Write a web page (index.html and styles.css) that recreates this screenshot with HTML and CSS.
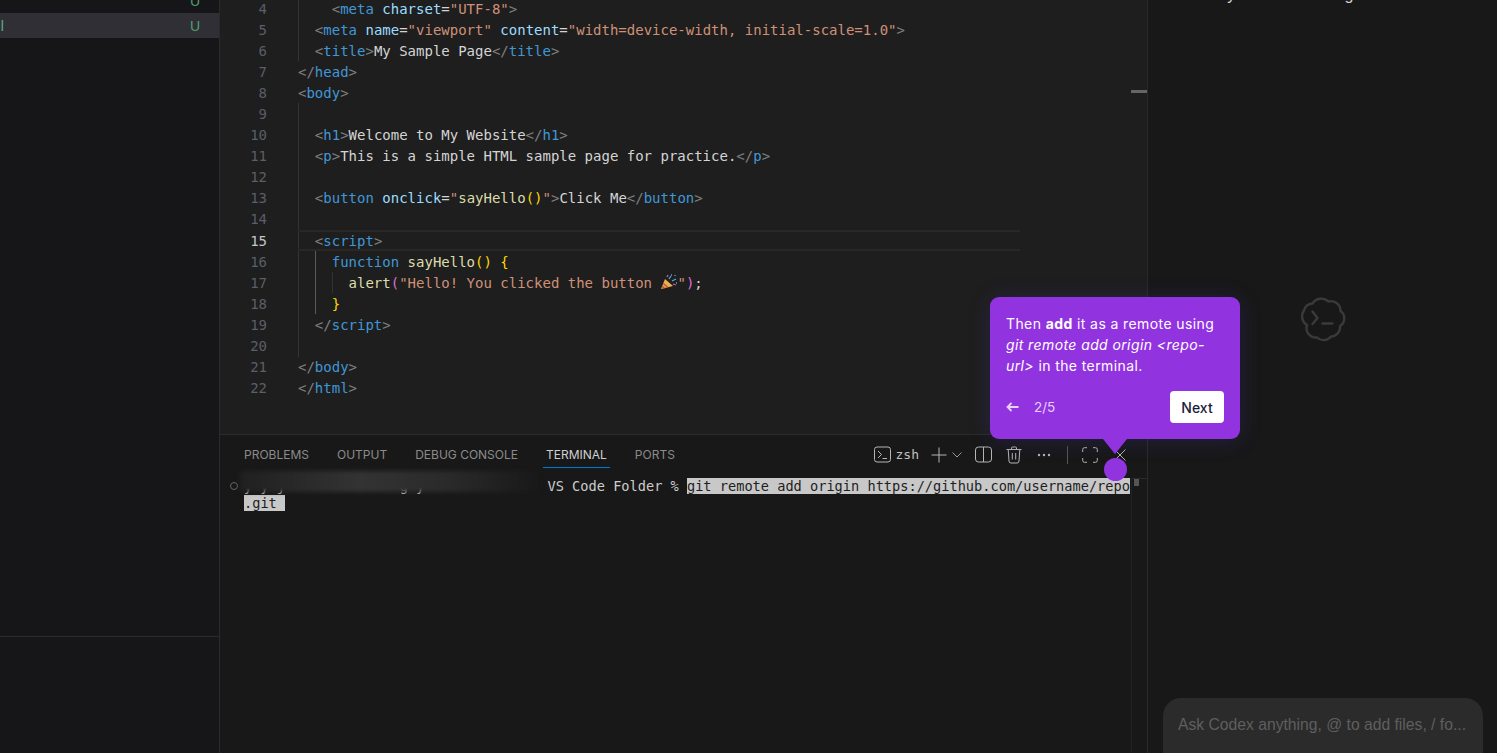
FILE: index.html
```html
<!DOCTYPE html>
<html lang="en">

<head>
    <meta charset="UTF-8">
    <meta name="viewport" content="width=device-width, initial-scale=1.0">
    <title>VS Code Terminal</title>
    <link rel="stylesheet" href="styles.css">
</head>

<body>
    <aside class="sidebar">
        <div class="files">
            <div class="file"><span class="file-name"></span><span class="file-status">U</span></div>
            <div class="file active"><span class="file-name">index.html</span><span class="file-status">U</span></div>
        </div>
        <div class="outline"></div>
    </aside>

    <main class="main">
        <section class="editor">
            <div class="lines">
                <div class="line"><span class="num">4</span><span class="ind"></span><span class="code">  <i>&lt;</i><b>meta</b> <u>charset</u>=<s>"UTF-8"</s><i>&gt;</i></span></div>
                <div class="line"><span class="num">5</span><span class="ind"></span><span class="code"><i>&lt;</i><b>meta</b> <u>name</u>=<s>"viewport"</s> <u>content</u>=<s>"width=device-width, initial-scale=1.0"</s><i>&gt;</i></span></div>
                <div class="line"><span class="num">6</span><span class="ind"></span><span class="code"><i>&lt;</i><b>title</b><i>&gt;</i>My Sample Page<i>&lt;/</i><b>title</b><i>&gt;</i></span></div>
                <div class="line"><span class="num">7</span><span class="code"><i>&lt;/</i><b>head</b><i>&gt;</i></span></div>
                <div class="line"><span class="num">8</span><span class="code"><i>&lt;</i><b>body</b><i>&gt;</i></span></div>
                <div class="line"><span class="num">9</span><span class="ind"></span></div>
                <div class="line"><span class="num">10</span><span class="ind"></span><span class="code"><i>&lt;</i><b>h1</b><i>&gt;</i>Welcome to My Website<i>&lt;/</i><b>h1</b><i>&gt;</i></span></div>
                <div class="line"><span class="num">11</span><span class="ind"></span><span class="code"><i>&lt;</i><b>p</b><i>&gt;</i>This is a simple HTML sample page for practice.<i>&lt;/</i><b>p</b><i>&gt;</i></span></div>
                <div class="line"><span class="num">12</span><span class="ind"></span></div>
                <div class="line"><span class="num">13</span><span class="ind"></span><span class="code"><i>&lt;</i><b>button</b> <u>onclick</u>=<s>"</s><em>sayHello</em><mark>()</mark><s>"</s><i>&gt;</i>Click Me<i>&lt;/</i><b>button</b><i>&gt;</i></span></div>
                <div class="line"><span class="num">14</span><span class="ind"></span></div>
                <div class="line current"><span class="num">15</span><span class="ind"></span><span class="code"><i>&lt;</i><b>script</b><i>&gt;</i></span></div>
                <div class="line"><span class="num">16</span><span class="ind"></span><span class="ind on"></span><span class="code"><b>function</b> <em>sayHello</em><mark>()</mark> <mark>{</mark></span></div>
                <div class="line"><span class="num">17</span><span class="ind"></span><span class="ind on"></span><span class="ind"></span><span class="code"><em>alert</em><kbd>(</kbd><s>"Hello! You clicked the button <svg class="popper" viewBox="0 0 18 16"><path d="M1 15 5 5l8 7z" fill="#e8b24a"/><path d="M3.300 9.500l4.600 4M2.200 12.400l2.400 2" stroke="#c0503c" stroke-width="1.400"/><path d="M9 5l2-3M12 7l4-2M11 1h1M15 1v1M16 9h1" stroke="#5aa7d8" stroke-width="1.300"/><path d="M7 3l1-2M13 10l3 1" stroke="#d85a9c" stroke-width="1.300"/></svg>"</s><kbd>)</kbd>;</span></div>
                <div class="line"><span class="num">18</span><span class="ind"></span><span class="ind on"></span><span class="code"><mark>}</mark></span></div>
                <div class="line"><span class="num">19</span><span class="ind"></span><span class="code"><i>&lt;/</i><b>script</b><i>&gt;</i></span></div>
                <div class="line"><span class="num">20</span><span class="ind"></span></div>
                <div class="line"><span class="num">21</span><span class="code"><i>&lt;/</i><b>body</b><i>&gt;</i></span></div>
                <div class="line"><span class="num">22</span><span class="code"><i>&lt;/</i><b>html</b><i>&gt;</i></span></div>
            </div>
            <div class="ruler"><span class="ruler-mark"></span></div>
        </section>

        <section class="panel">
            <div class="panel-head">
                <nav class="tabs">
                    <a>PROBLEMS</a>
                    <a>OUTPUT</a>
                    <a>DEBUG CONSOLE</a>
                    <a class="active">TERMINAL</a>
                    <a>PORTS</a>
                </nav>
                <div class="actions">
                    <svg class="icon" width="17" height="17" viewBox="0 0 17 17"><rect x="0.500" y="1" width="16" height="15" rx="2.500"/><path d="M4 5l3.500 3.500L4 12M8.500 12.500H13"/></svg>
                    <span class="shell">zsh</span>
                    <svg class="icon plus" width="16" height="16" viewBox="0 0 16 16"><path d="M8 .5v15M.5 8h15"/></svg>
                    <svg class="icon chev" width="10" height="6" viewBox="0 0 10 6"><path d="M.5.5 5 5 9.500.5"/></svg>
                    <svg class="icon split" width="17" height="17" viewBox="0 0 17 17"><rect x="0.500" y="1" width="16" height="15" rx="3"/><path d="M8.500 1v15"/></svg>
                    <svg class="icon trash" width="16" height="18" viewBox="0 0 16 18"><path d="M.5 3.500h15M5.500 3.500V2a1 1 0 0 1 1-1h3a1 1 0 0 1 1 1v1.500M2.200 3.500l.8 11.500a2 2 0 0 0 2 2h6a2 2 0 0 0 2-2l.8-11.500M6.300 7v6.500M9.700 7v6.500"/></svg>
                    <svg class="dots" width="14" height="4" viewBox="0 0 14 4"><circle cx="2" cy="2" r="1.200"/><circle cx="7" cy="2" r="1.200"/><circle cx="12" cy="2" r="1.200"/></svg>
                    <span class="sep"></span>
                    <svg class="icon expand" width="16" height="16" viewBox="0 0 16 16"><path d="M.7 5V2.500a1.800 1.800 0 0 1 1.800-1.800H5M11 .7h2.500a1.800 1.800 0 0 1 1.800 1.800V5M15.300 11v2.500a1.800 1.800 0 0 1-1.800 1.800H11M5 15.300H2.500a1.800 1.800 0 0 1-1.800-1.800V11"/></svg>
                    <svg class="icon close" width="14" height="14" viewBox="0 0 14 14"><path d="M1.500 1.500l11 11M12.500 1.500l-11 11"/></svg>
                </div>
            </div>
            <div class="term">
                <div class="term-body">
                    <span class="term-dot"></span>
                    <div class="term-text">
                        <div class="term-line">y y j              g y               VS Code Folder % <span class="sel">git remote add origin https://github.com/username/repo</span></div>
                        <div class="term-line"><span class="sel">.git </span></div>
                    </div>
                    <div class="blur"></div>
                </div>
                <div class="term-ruler"><span class="term-thumb"></span></div>
            </div>
        </section>
    </main>

    <aside class="chat">
        <div class="chat-title">
            <span>Create Python task manager UI.</span>
            <span class="chat-more">&middot;&middot;</span>
        </div>
        <div class="chat-empty">
            <svg width="48" height="48" viewBox="0 0 48 48" fill="none" stroke="#3a3a3a" stroke-width="2.400" stroke-linecap="round" stroke-linejoin="round">
                <path d="M13.500 9.500A10.500 10.500 0 0 1 29.500 7.500 9.500 9.500 0 0 1 41.500 17 9 9 0 0 1 41 32 9.500 9.500 0 0 1 32 42.500 9.500 9.500 0 0 1 18 43.500 9.500 9.500 0 0 1 8 31 10 10 0 0 1 5 16.500 9.500 9.500 0 0 1 13.500 9.500Z"/>
                <path d="M13.500 17.500l5 6.500-5 6M23.500 29.500h10"/>
            </svg>
        </div>
        <div class="chat-input">Ask Codex anything, @ to add files, / fo...</div>
    </aside>

    <div class="tour">
        <p class="tour-text">Then <strong>add</strong> it as a remote using <em>git remote add origin &lt;repo-url&gt;</em> in the terminal.</p>
        <div class="tour-foot">
            <svg class="tour-back" width="13" height="10" viewBox="0 0 13 10"><path d="M12.500 5H1.500M5.500 1 1.500 5l4 4"/></svg>
            <span class="tour-count">2/5</span>
            <button class="tour-next">Next</button>
        </div>
        <span class="tour-tail"></span>
    </div>
    <span class="tour-dot"></span>
</body>

</html>
```

FILE: styles.css
```css
* {
    box-sizing: border-box;
}

body {
    display: flex;
    margin: 0;
    height: 753px;
    overflow: hidden;
    background: #181818;
    font-family: "Liberation Sans", Arial, sans-serif;
}

/* sidebar */
.sidebar {
    display: flex;
    flex-direction: column;
    width: 220px;
    background: #161618;
    border-right: 1px solid #2a2a2a;
    overflow: hidden;
}
.files {
    flex: 1;
    margin-top: -12px;
}
.file {
    display: flex;
    justify-content: space-between;
    align-items: center;
    height: 25px;
    padding-right: 19px;
    font-size: 14px;
    color: #4f9f6f;
}
.file.active {
    background: #2f2f35;
}
.file-name {
    margin-left: -60px;
    color: #5ab37a;
}
.outline {
    height: 117px;
    border-top: 1px solid #2c2c2c;
}

/* editor */
.main {
    display: flex;
    flex-direction: column;
    width: 927px;
    background: #1e1e1e;
}
.editor {
    display: flex;
    height: 434px;
    overflow: hidden;
}
.lines {
    flex: 1;
    margin-top: -2px;
    font-family: "DejaVu Sans Mono", monospace;
    font-size: 14px;
    color: #d4d4d4;
}
.line {
    display: flex;
    align-items: center;
    width: 800px;
    height: 21.100px;
}
.line.current {
    position: relative;
}
.line.current::after {
    content: '';
    position: absolute;
    left: 78px;
    width: 722px;
    top: 0;
    bottom: 0;
    border-top: 2px solid #282828;
    border-bottom: 2px solid #282828;
}
.num {
    flex: none;
    width: 47px;
    margin-right: 31px;
    text-align: right;
    color: #5a5f68;
}
.current .num {
    color: #c6c6c6;
}
.code {
    white-space: pre;
}
.ind {
    flex: none;
    width: 16.860px;
    height: 100%;
    border-left: 1px solid #333;
}
.ind.on {
    border-left-color: #5a5a5a;
}
.line i {
    font-style: normal;
    color: #808080;
}
.line b {
    font-weight: normal;
    color: #4097d6;
}
.line u {
    text-decoration: none;
    color: #9cdcfe;
}
.line s {
    text-decoration: none;
    color: #ce9178;
}
.line em {
    font-style: normal;
    color: #dcdcaa;
}
.line mark {
    background: none;
    color: #ffd700;
}
.line kbd {
    font: inherit;
    color: #da70d6;
}
.popper {
    width: 18px;
    height: 16px;
    margin-right: -1px;
    fill: none;
    vertical-align: -2px;
}
.ruler {
    width: 16px;
    padding-top: 90px;
}
.ruler-mark {
    display: block;
    height: 3px;
    background: #666;
}

/* panel */
.panel {
    flex: 1;
    display: flex;
    flex-direction: column;
    background: #181818;
    border-top: 1px solid #2b2b2b;
}
.panel-head {
    display: flex;
    justify-content: space-between;
    align-items: center;
    height: 43px;
    padding: 0 20px 4px 24px;
}
.tabs {
    display: flex;
    gap: 28px;
    font-family: Inter, sans-serif;
    font-size: 12px;
    color: #8b8b8b;
}
.tabs a {
    position: relative;
}
.tabs a.active {
    color: #d0d0d0;
}
.tabs a.active::after {
    content: '';
    position: absolute;
    left: -3px;
    right: -3px;
    bottom: -6px;
    height: 1px;
    background: #0078d4;
}
.actions {
    display: flex;
    align-items: center;
}
.icon {
    fill: none;
    stroke: #b5b5b5;
    stroke-width: 1;
    flex: none;
}
.shell {
    margin: 0 12px 0 5px;
    font-family: "DejaVu Sans Mono", monospace;
    font-size: 13px;
    color: #c0c0c0;
}
.chev {
    margin: 0 13px 0 5px;
    stroke: #999;
}
.trash {
    margin-left: 14px;
}
.dots {
    margin-left: 15px;
    fill: #b5b5b5;
}
.sep {
    width: 1px;
    height: 18px;
    margin: 0 14px 0 16px;
    background: #555;
}
.close {
    margin-left: 15px;
}

/* terminal */
.term {
    flex: 1;
    display: flex;
}
.term-body {
    flex: 1;
    position: relative;
    display: flex;
    padding-left: 10px;
}
.term-dot {
    flex: none;
    width: 8px;
    height: 8px;
    margin: 4px 6px 0 0;
    border: 1px solid #666;
    border-radius: 50%;
}
.term-text {
    font-family: "DejaVu Sans Mono", monospace;
    font-size: 13.630px;
    color: #cccccc;
}
.term-line {
    height: 17px;
    line-height: 17px;
    white-space: pre;
}
.sel {
    background: #c8c8c8;
    color: #1e1e1e;
}
.blur {
    position: absolute;
    left: 20px;
    top: -7px;
    width: 300px;
    height: 21px;
    background: linear-gradient(90deg, #202020 0%, #333 40%, #2a2a2a 70%, #181818 100%);
    filter: blur(2px);
}
.term-ruler {
    flex: none;
    width: 16px;
    border-top: 1px solid #2b2b2b;
    border-left: 1px solid #222;
    padding-left: 2px;
}
.term-thumb {
    display: block;
    width: 5px;
    height: 7px;
    background: #555;
}

/* right panel */
.chat {
    flex: 1;
    display: flex;
    flex-direction: column;
    background: #181818;
    border-left: 1px solid #2a2a2a;
    overflow: hidden;
}
.chat-title {
    display: flex;
    justify-content: space-between;
    margin-top: -14px;
    padding: 0 14px 0 16px;
    height: 18px;
    font-size: 16px;
    color: #cfcfcf;
}
.chat-more {
    color: #555;
}
.chat-empty {
    display: flex;
    justify-content: center;
    margin-top: 290px;
}
.chat-input {
    margin: auto 14px -30px 15px;
    height: 85px;
    padding: 18px 15px;
    border-radius: 18px;
    background: #2b2b2b;
    font-size: 15.700px;
    white-space: nowrap;
    color: #5f5f5f;
}

/* tour popup */
.tour {
    position: absolute;
    left: 990px;
    top: 297px;
    width: 250px;
    height: 142px;
    padding: 16px;
    border-radius: 9px;
    background: #9233e0;
    box-shadow: 0 2px 22px rgba(70, 60, 200, 0.22);
    font-family: Inter, sans-serif;
    color: #fff;
}
.tour-text {
    margin: 0;
    font-size: 14px;
    letter-spacing: 0.400px;
    line-height: 21px;
}
.tour-text strong {
    font-weight: 700;
}
.tour-foot {
    display: flex;
    align-items: center;
    margin-top: 15px;
}
.tour-back {
    fill: none;
    stroke: #e6d2f8;
    stroke-width: 1.800;
}
.tour-count {
    margin-left: 15px;
    font-size: 13.500px;
    color: #e6d2f8;
}
.tour-next {
    margin-left: auto;
    width: 54px;
    height: 32px;
    padding: 0;
    border: none;
    border-radius: 4px;
    background: #fff;
    font: 500 14px Inter, sans-serif;
    color: #1e1b3a;
}
.tour-tail {
    position: absolute;
    left: 113px;
    top: 142px;
    border-left: 12px solid transparent;
    border-right: 12px solid transparent;
    border-top: 15px solid #9233e0;
}
.tour-dot {
    position: absolute;
    left: 1104px;
    top: 458px;
    width: 23px;
    height: 23px;
    border-radius: 50%;
    background: #9233e0;
}
```
